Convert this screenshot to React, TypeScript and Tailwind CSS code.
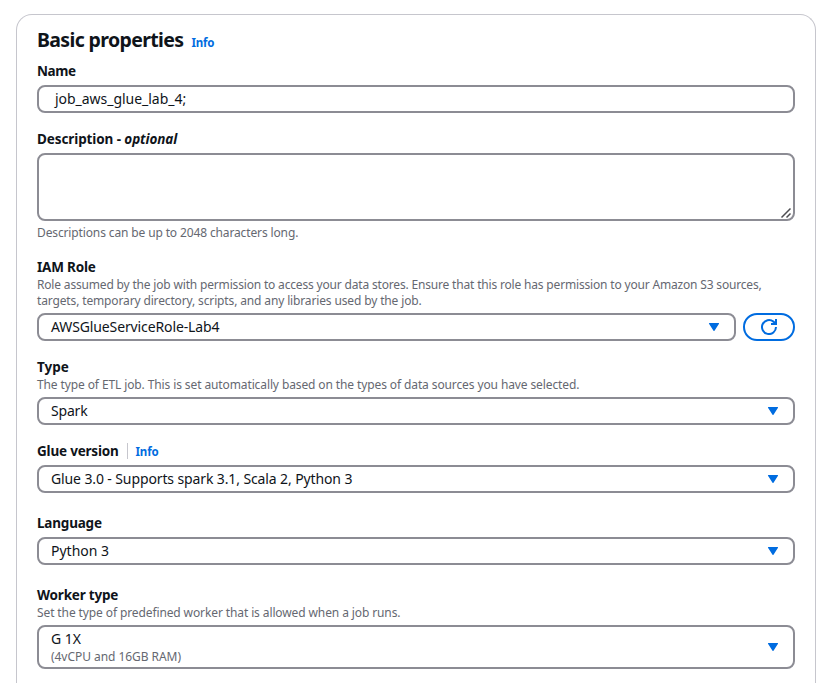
import type { ReactNode } from "react";

function Caret() {
  return (
    <svg width="16" height="16" viewBox="0 0 16 16" className="shrink-0" fill="#006ce0">
      <path d="M3.4 4h9.2c.4 0 .6.4.4.7L8.5 11.7a.6.6 0 0 1-1 0L3 4.7c-.2-.3 0-.7.4-.7Z" />
    </svg>
  );
}

function Label({ children }: { children: ReactNode }) {
  return <div className="flex h-5 items-center text-[13.5px] leading-5 font-bold whitespace-pre tracking-[-0.2px]">{children}</div>;
}

function Hint({ children }: { children: ReactNode }) {
  return <div className="text-[12px] leading-4 whitespace-nowrap text-[#656871]">{children}</div>;
}

function Select({ children, className = "h-7" }: { children: ReactNode; className?: string }) {
  return (
    <div className={`mt-1 flex grow items-center justify-between rounded-lg border-2 border-[#8c8c94] bg-white pr-3 pl-3 text-[14px] leading-5 whitespace-nowrap ${className}`}>
      <div>{children}</div>
      <Caret />
    </div>
  );
}

export default function App() {
  return (
    <div className="h-[696px] w-[832px] overflow-hidden bg-white px-4 pt-3.5 font-['Noto_Sans',sans-serif] text-[#0f141a]">
      <div className="h-[669px] rounded-t-2xl border border-b-0 border-[#c6c6cd] px-5 pt-[13px]">
        <div className="flex h-6 items-center">
          <h2 className="text-[19.5px] leading-6 font-bold tracking-[-0.64px]">Basic properties</h2>
          <a className="mt-1.5 ml-2 text-[11.5px] leading-4 font-bold tracking-[-0.2px] text-[#006ce0]">Info</a>
        </div>
        <div className="mt-[9px]">
          <Label><span className="tracking-[-0.4px]">Name</span></Label>
          <div className="mt-1 flex h-7 items-center rounded-lg border-2 border-[#8c8c94] px-4 text-[14px] leading-5">
            <span className="tracking-[-0.03px]">job_aws_glue_lab_4;</span>
          </div>
        </div>
        <div className="mt-4">
          <Label><span className="tracking-[-0.1px]">Description - <i>optional</i></span></Label>
          <div className="mt-1 mb-1 flex h-[68px] items-end justify-end rounded-lg border-2 border-[#8c8c94]">
            <svg width="14" height="14" viewBox="0 0 14 14" stroke="#4d4d52" strokeWidth="1.5">
              <path d="M2.5 12.5 11.5 3.5M7.5 12.5 11.5 8.5" />
            </svg>
          </div>
          <Hint><span className="tracking-[-0.13px]">Descriptions can be up to 2048 characters long.</span></Hint>
        </div>
        <div className="mt-4">
          <Label><span>IAM Role</span></Label>
          <Hint>
            <span className="tracking-[-0.175px]">Role assumed by the job with permission to access your data stores. Ensure that this role has permission to your Amazon S3 sources,</span><br />
            <span className="tracking-[-0.14px]">targets, temporary directory, scripts, and any libraries used by the job.</span>
          </Hint>
          <div className="flex gap-[7px]">
            <Select><span className="tracking-[-0.12px]">AWSGlueServiceRole-Lab4</span></Select>
            <button className="mt-1 flex h-7 w-[52px] items-center justify-center rounded-full border-2 border-[#006ce0]">
              <svg width="16" height="16" viewBox="0 0 16 16" fill="none" stroke="#006ce0" strokeWidth="2">
                <path d="M15 8a7 7 0 1 1-2.6-5.4L15 5M15 0v5h-5" />
              </svg>
            </button>
          </div>
        </div>
        <div className="mt-4">
          <Label><span className="tracking-normal">Type</span></Label>
          <Hint><span className="tracking-[-0.11px]">The type of ETL job. This is set automatically based on the types of data sources you have selected.</span></Hint>
          <Select><span className="tracking-[-0.2px]">Spark</span></Select>
        </div>
        <div className="mt-4">
          <Label>
            <span>Glue version</span>
            <span className="ml-2 h-4 w-px bg-[#c6c6cd]" />
            <a className="mt-0.5 ml-2 text-[11.5px] text-[#006ce0]">Info</a>
          </Label>
          <Select><span className="tracking-[-0.115px]">Glue 3.0 - Supports spark 3.1, Scala 2, Python 3</span></Select>
        </div>
        <div className="mt-5">
          <Label><span>Language</span></Label>
          <Select><span>Python 3</span></Select>
        </div>
        <div className="mt-5">
          <Label><span>Worker type</span></Label>
          <Hint><span className="tracking-[-0.11px]">Set the type of predefined worker that is allowed when a job runs.</span></Hint>
          <Select className="h-11">
            <div className="leading-5">G 1X</div>
            <Hint><span className="tracking-[-0.05px]">(4vCPU and 16GB RAM)</span></Hint>
          </Select>
        </div>
      </div>
    </div>
  );
}
